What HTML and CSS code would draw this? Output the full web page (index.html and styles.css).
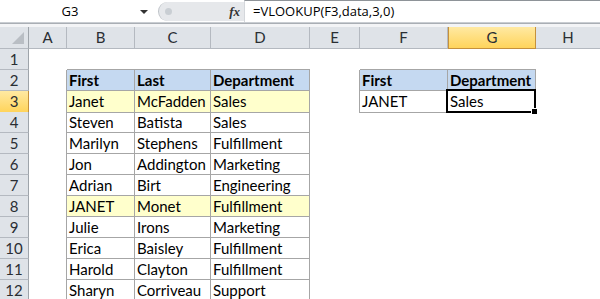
FILE: index.html
```html
<!DOCTYPE html>
<html lang="en">
<head>
    <meta charset="UTF-8">
    <title>VLOOKUP piemērs</title>
    <link rel="stylesheet" href="styles.css">
</head>
<body>

<!-- Formulu josla -->
<div class="formula-bar">
    <div class="name-box">
        <span class="name">G3</span>
        <span class="caret"></span>
    </div>
    <div class="fx-area">
        <span class="grip"></span>
        <span class="fx">fx</span>
    </div>
    <div class="formula">=VLOOKUP(F3,data,3,0)</div>
</div>
<div class="bar-gap"></div>

<!-- Lapa -->
<div class="sheet">
    <div class="row head">
        <div class="corner"></div>
        <div class="col">A</div>
        <div class="col">B</div>
        <div class="col">C</div>
        <div class="col">D</div>
        <div class="col">E</div>
        <div class="col">F</div>
        <div class="col active">G</div>
        <div class="col">H</div>
    </div>
    <div class="row">
        <div class="num">1</div>
        <div class="c"></div>
        <div class="c tb"></div><div class="c tb"></div><div class="c tb"></div>
        <div class="c"></div>
        <div class="c tb"></div><div class="c tb"></div>
        <div class="c"></div>
    </div>
    <div class="row">
        <div class="num">2</div>
        <div class="c lb"></div>
        <div class="c t th">First</div><div class="c t th">Last</div><div class="c t th">Department</div>
        <div class="c lb"></div>
        <div class="c t th">First</div><div class="c t th">Department</div>
        <div class="c"></div>
    </div>
    <div class="row">
        <div class="num active">3</div>
        <div class="c lb"></div>
        <div class="c t hl">Janet</div><div class="c t hl">McFadden</div><div class="c t hl">Sales</div>
        <div class="c lb"></div>
        <div class="c t">JANET</div><div class="c t sel">Sales<span class="handle"></span></div>
        <div class="c"></div>
    </div>
    <div class="row">
        <div class="num">4</div>
        <div class="c lb"></div>
        <div class="c t">Steven</div><div class="c t">Batista</div><div class="c t">Sales</div>
        <div class="c"></div><div class="c"></div><div class="c"></div><div class="c"></div>
    </div>
    <div class="row">
        <div class="num">5</div>
        <div class="c lb"></div>
        <div class="c t">Marilyn</div><div class="c t">Stephens</div><div class="c t">Fulfillment</div>
        <div class="c"></div><div class="c"></div><div class="c"></div><div class="c"></div>
    </div>
    <div class="row">
        <div class="num">6</div>
        <div class="c lb"></div>
        <div class="c t">Jon</div><div class="c t">Addington</div><div class="c t">Marketing</div>
        <div class="c"></div><div class="c"></div><div class="c"></div><div class="c"></div>
    </div>
    <div class="row">
        <div class="num">7</div>
        <div class="c lb"></div>
        <div class="c t">Adrian</div><div class="c t">Birt</div><div class="c t">Engineering</div>
        <div class="c"></div><div class="c"></div><div class="c"></div><div class="c"></div>
    </div>
    <div class="row">
        <div class="num">8</div>
        <div class="c lb"></div>
        <div class="c t hl">JANET</div><div class="c t hl">Monet</div><div class="c t hl">Fulfillment</div>
        <div class="c"></div><div class="c"></div><div class="c"></div><div class="c"></div>
    </div>
    <div class="row">
        <div class="num">9</div>
        <div class="c lb"></div>
        <div class="c t">Julie</div><div class="c t">Irons</div><div class="c t">Marketing</div>
        <div class="c"></div><div class="c"></div><div class="c"></div><div class="c"></div>
    </div>
    <div class="row">
        <div class="num">10</div>
        <div class="c lb"></div>
        <div class="c t">Erica</div><div class="c t">Baisley</div><div class="c t">Fulfillment</div>
        <div class="c"></div><div class="c"></div><div class="c"></div><div class="c"></div>
    </div>
    <div class="row">
        <div class="num">11</div>
        <div class="c lb"></div>
        <div class="c t">Harold</div><div class="c t">Clayton</div><div class="c t">Fulfillment</div>
        <div class="c"></div><div class="c"></div><div class="c"></div><div class="c"></div>
    </div>
    <div class="row">
        <div class="num">12</div>
        <div class="c lb"></div>
        <div class="c t">Sharyn</div><div class="c t">Corriveau</div><div class="c t">Support</div>
        <div class="c"></div><div class="c"></div><div class="c"></div><div class="c"></div>
    </div>
</div>

</body>
</html>
```

FILE: styles.css
```css
/* Pamats */
body {
    margin: 0;
    background: #fff;
    font-family: "Lato", "Liberation Sans", sans-serif;
    overflow: hidden;
}

/* Formulu josla */
.formula-bar {
    display: flex;
    height: 23px;
    box-sizing: border-box;
    border-bottom: 1px solid #c9cdd2;
    background: #fff;
}

.name-box {
    width: 158px;
    display: flex;
    align-items: center;
    font-family: "Open Sans", sans-serif;
    font-size: 13px;
    color: #000;
}

.name {
    width: 140px;
    text-align: center;
}

.caret {
    width: 0;
    height: 0;
    border-left: 4px solid transparent;
    border-right: 4px solid transparent;
    border-top: 4px solid #333;
    margin-top: 2px;
}

.fx-area {
    width: 85px;
    margin: 2px 0 1px;
    display: flex;
    align-items: center;
    justify-content: space-between;
    background: #e6e8eb;
    border-radius: 10px 0 0 10px;
    border-left: 1px solid #bfc3c8;
}

.grip {
    width: 7px;
    height: 7px;
    margin-left: 6px;
    border-radius: 50%;
    background: #c9ced3;
}

.fx {
    font-family: "Liberation Serif", serif;
    font-style: italic;
    font-weight: bold;
    font-size: 13px;
    color: #333;
    margin-right: 4px;
}

.formula {
    flex: 1;
    padding-left: 8px;
    border-left: 1px solid #d4d7db;
    border-top: 1px solid #8e9398;
    font-family: "Open Sans", sans-serif;
    font-size: 13px;
    line-height: 20px;
    color: #000;
}

.bar-gap {
    height: 4px;
    box-sizing: border-box;
    border-top: 1px solid #a9aeb4;
    background: #f3f4f6;
}

/* Rindas un šūnas */
.row {
    display: grid;
    grid-template-columns: 29px 38px 68px 76px 99px 50px 88px 88px 65px;
    height: 21px;
}

.row.head {
    height: 22px;
}

.corner,
.col,
.num {
    box-sizing: border-box;
    background: #dfe3e8;
    border-right: 1px solid #b4b9c0;
    border-bottom: 1px solid #b4b9c0;
    color: #2a2e33;
    font-size: 15px;
    text-align: center;
    line-height: 21px;
}

.corner {
    position: relative;
    border-right-color: #9ea4aa;
}

.corner::after {
    content: "";
    position: absolute;
    right: 4px;
    bottom: 4px;
    width: 0;
    height: 0;
    border-left: 12px solid transparent;
    border-bottom: 12px solid #b9bec4;
}

.num {
    border-right-color: #9ea4aa;
    line-height: 20px;
}

.col.active,
.num.active {
    background: linear-gradient(#ffe9a2, #ffd45b);
    border-color: #c5913c;
}

.col.active {
    border-left: 1px solid #c5913c;
}

.c {
    box-sizing: border-box;
    padding: 0 2px;
    font-size: 15px;
    line-height: 21px;
    color: #000;
    white-space: nowrap;
    overflow: hidden;
}

/* Tabulas robežas */
.t {
    border-right: 1px solid #a6a6a6;
    border-bottom: 1px solid #a6a6a6;
}

.lb {
    border-right: 1px solid #a6a6a6;
}

.tb {
    border-bottom: 1px solid #a6a6a6;
}

.th {
    background: #c5d9f1;
    font-weight: bold;
}

.hl {
    background: #ffffcc;
}

/* Aktīvā šūna */
.sel {
    position: relative;
    overflow: visible;
}

.sel::after {
    content: "";
    position: absolute;
    top: -2px;
    left: -2px;
    right: -1px;
    bottom: -1px;
    border: 2px solid #000;
}

.handle {
    position: absolute;
    right: -3px;
    bottom: -3px;
    width: 5px;
    height: 5px;
    background: #000;
    border: 1px solid #fff;
    z-index: 1;
}
```
